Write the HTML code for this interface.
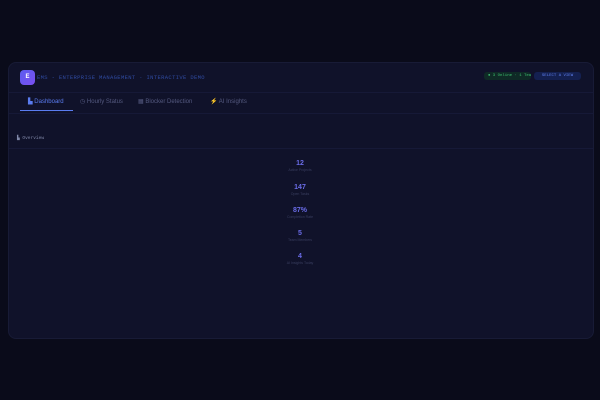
<!DOCTYPE html>
<html><head><style>
body{margin:0;width:600px;height:400px;background:#0a0b1a;font-family:"Liberation Sans",sans-serif;overflow:hidden;position:relative}
.card{position:absolute;left:8px;top:62px;width:584px;height:275px;background:#10122a;border-radius:8px;border:1px solid #181b36}
.logo{position:absolute;left:11px;top:7px;width:15px;height:15px;border-radius:4px;background:linear-gradient(135deg,#5b5cf0,#7a4ff0);color:#fff;font-size:6px;font-weight:bold;text-align:center;line-height:15px}
.title{position:absolute;left:28px;top:11px;font-family:"Liberation Mono",monospace;font-size:5.5px;color:#2f4aa0;letter-spacing:0.35px}
.badge1{position:absolute;left:475px;top:9px;width:39px;padding:2px 4px;background:#0f2a26;color:#3ec070;font-size:4px;border-radius:3px;font-family:"Liberation Mono",monospace;white-space:nowrap;overflow:hidden}
.badge2{position:absolute;left:525px;top:9px;width:39px;padding:2px 4px;background:#142050;color:#6080f0;font-size:4px;border-radius:3px;font-family:"Liberation Mono",monospace;white-space:nowrap;text-align:center}
.tabs{position:absolute;left:0;top:29px;width:584px;height:20px;border-top:1px solid #161937;border-bottom:1px solid #161937}
.tab{position:absolute;top:5px;font-size:6px;color:#555a80}
.tab.a{color:#5a7cf0}
.ul{position:absolute;left:11px;top:17px;width:53px;height:1px;background:#5a7cf0}
.sec{position:absolute;left:0;top:55px;width:584px;height:30px;border-bottom:1px solid #161937}
.ov{position:absolute;left:8px;top:18px;font-size:4.5px;color:#8088a8;font-family:"Liberation Mono",monospace}
.stat{position:absolute;left:249px;width:84px;text-align:center}
.n{font-size:7px;color:#6a6ce8;font-weight:bold}
.l{font-size:3.5px;color:#3a3f60;margin-top:1px}
</style></head><body>
<div class="card">
<div class="logo">E</div>
<div class="title">EMS - ENTERPRISE MANAGEMENT · INTERACTIVE DEMO</div>
<div class="badge1">● 3 Online · 1 Team</div>
<div class="badge2">SELECT A VIEW</div>
<div class="tabs">
<div class="tab a" style="left:19px">▙ Dashboard</div>
<div class="tab" style="left:71px">◷ Hourly Status</div>
<div class="tab" style="left:129px">▦ Blocker Detection</div>
<div class="tab" style="left:201px">⚡ AI Insights</div>
<div class="ul"></div>
</div>
<div class="sec"><div class="ov">▙ Overview</div></div>
<div class="stat" style="top:97px"><div class="n">12</div><div class="l">Active Projects</div></div>
<div class="stat" style="top:121px"><div class="n">147</div><div class="l">Open Tasks</div></div>
<div class="stat" style="top:144px"><div class="n">87%</div><div class="l">Completion Rate</div></div>
<div class="stat" style="top:167px"><div class="n">5</div><div class="l">Team Members</div></div>
<div class="stat" style="top:190px"><div class="n">4</div><div class="l">AI Insights Today</div></div>
</div>
</body></html>
